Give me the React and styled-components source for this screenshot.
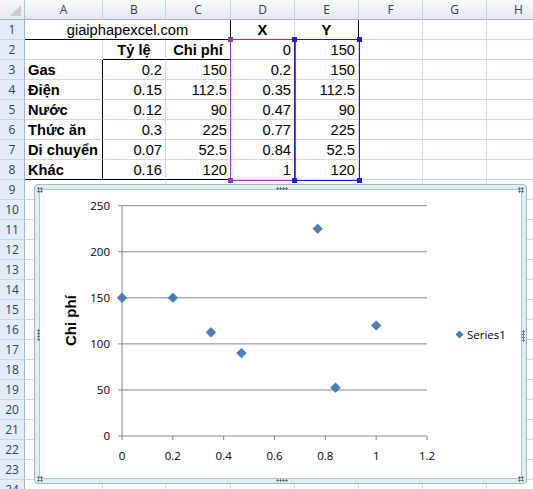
import React from "react";
import styled, { createGlobalStyle } from "styled-components";

//? sheet geometry
const COLS = [25, 78, 63, 65, 64, 64, 64, 64, 64];
const LETTERS = ["A", "B", "C", "D", "E", "F", "G", "H"];

const b = true;
const rows = [
  [
    { v: "giaiphapexcel.com", span: 3, align: "center", bb: b, br: b },
    { v: "X", bold: b, align: "center", bb: b },
    { v: "Y", bold: b, align: "center", bb: b, br: b },
    {}, {}, {},
  ],
  [
    {},
    { v: "Tỷ lệ", bold: b, align: "center", bb: b },
    { v: "Chi phí", bold: b, align: "center", bb: b, br: b },
    { v: "0" }, { v: "150" }, {}, {}, {},
  ],
  ["Gas", "0.2", "150", "0.2", "150"],
  ["Điện", "0.15", "112.5", "0.35", "112.5"],
  ["Nước", "0.12", "90", "0.47", "90"],
  ["Thức ăn", "0.3", "225", "0.77", "225"],
  ["Di chuyển", "0.07", "52.5", "0.84", "52.5"],
  ["Khác", "0.16", "120", "1", "120"],
];

const toCells = (r, i) => {
  if (typeof r[0] !== "string") return r;
  const last = i === 7;
  return [
    { v: r[0], bold: b, align: "left", br: b, bb: last },
    { v: r[1], bb: last },
    { v: r[2], br: b, bb: last },
    { v: r[3] },
    { v: r[4] },
    {}, {}, {},
  ];
};

const pts = [
  [0, 150],
  [0.2, 150],
  [0.35, 112.5],
  [0.47, 90],
  [0.77, 225],
  [0.84, 52.5],
  [1, 120],
];

//? chart scale (svg coords)
const X0 = 22;
const XS = 305 / 1.2;
const Y0 = 246;
const YS = 230.3 / 250;
const px = (x) => X0 + x * XS;
const py = (y) => Y0 - y * YS;

const diamond = (cx, cy, r) =>
  `M${cx} ${cy - r} L${cx + r} ${cy} L${cx} ${cy + r} L${cx - r} ${cy} Z`;

const GRIPS = ["tl", "tr", "bl", "br", "tm", "bm", "lm", "rm"];

const App = () => {
  const body = rows.map(toCells);
  const empties = Array.from({ length: 16 }, () => Array(8).fill({}));
  const all = [...body, ...empties];

  return (
    <>
      <Global />
      <Wrapper>
        <Sheet>
          <Corner />
          {LETTERS.map((l) => (
            <ColHead key={l}>{l}</ColHead>
          ))}
          {all.map((cells, ri) => (
            <React.Fragment key={ri}>
              <RowHead>{ri + 1}</RowHead>
              {cells.map((c, ci) => (
                <Cell
                  key={ci}
                  $span={c.span}
                  $align={c.align || "right"}
                  $bold={c.bold}
                  $bb={c.bb}
                  $br={c.br}
                >
                  {c.v}
                </Cell>
              ))}
            </React.Fragment>
          ))}
        </Sheet>

        <RangeBox $color="#9a32c8" $left={230}>
          <Knob $v="top" $h="left" />
          <Knob $v="bottom" $h="left" />
        </RangeBox>
        <RangeBox $color="#1f1fc0" $left={294}>
          <Knob $v="top" $h="left" />
          <Knob $v="top" $h="right" />
          <Knob $v="bottom" $h="left" />
          <Knob $v="bottom" $h="right" />
        </RangeBox>

        <Frame>
          <Inner>
            <YTitle>Chi phí</YTitle>
            <Plot width="350" height="288" viewBox="0 0 350 288">
              {[50, 100, 150, 200, 250].map((v) => (
                <line
                  key={v}
                  x1={X0}
                  x2={px(1.2)}
                  y1={py(v)}
                  y2={py(v)}
                  stroke="#868686"
                />
              ))}
              <line x1={X0} x2={X0} y1={py(250)} y2={Y0} stroke="#868686" />
              <line x1={X0} x2={px(1.2)} y1={Y0} y2={Y0} stroke="#868686" />
              {[0, 50, 100, 150, 200, 250].map((v) => (
                <g key={v}>
                  <line x1={X0 - 4} x2={X0} y1={py(v)} y2={py(v)} stroke="#868686" />
                  <text x={10} y={py(v) + 4} textAnchor="end">
                    {v}
                  </text>
                </g>
              ))}
              {[0, 0.2, 0.4, 0.6, 0.8, 1, 1.2].map((v) => (
                <g key={v}>
                  <line x1={px(v)} x2={px(v)} y1={Y0} y2={Y0 + 4} stroke="#868686" />
                  <text x={px(v)} y={270} textAnchor="middle">
                    {v}
                  </text>
                </g>
              ))}
              {pts.map(([x, y]) => (
                <path
                  key={x}
                  d={diamond(px(x), py(y), 4.8)}
                  fill="#4a7ebb"
                  stroke="#3d6a9e"
                  strokeWidth="0.6"
                />
              ))}
            </Plot>
            <Legend>
              <svg width="9" height="9" viewBox="0 0 9 9">
                <path d={diamond(4.5, 4.5, 4)} fill="#4a7ebb" />
              </svg>
              <span>Series1</span>
            </Legend>
          </Inner>
          {GRIPS.map((g) => (
            <Grip key={g} $spot={g} />
          ))}
        </Frame>
      </Wrapper>
    </>
  );
};

//? styles
const Global = createGlobalStyle`
  html, body {
    margin: 0;
    padding: 0;
    background: #fff;
    overflow: hidden;
  }
`;

const Wrapper = styled.div`
  position: relative;
  width: 533px;
  height: 489px;
  overflow: hidden;
`;

const Sheet = styled.div`
  display: grid;
  grid-template-columns: ${COLS.map((c) => c + "px").join(" ")};
  grid-auto-rows: 20px;
  font-family: "Liberation Sans", Arial, sans-serif;
  font-size: 11pt;
  color: #000;
`;

const Corner = styled.div`
  position: relative;
  box-sizing: border-box;
  background: linear-gradient(#f7f8fa, #e6e9ee);
  border-right: 1px solid #b9c4d3;
  border-bottom: 1px solid #9eb0c6;

  &::after {
    content: "";
    position: absolute;
    right: 3px;
    bottom: 3px;
    border-left: 11px solid transparent;
    border-bottom: 11px solid #c3cbd8;
  }
`;

const ColHead = styled.div`
  box-sizing: border-box;
  display: flex;
  align-items: center;
  justify-content: center;
  background: linear-gradient(#f9fafb, #e6e9ee);
  border-right: 1px solid #cdd3dc;
  border-bottom: 1px solid #9eb0c6;
  font-family: "Open Sans", sans-serif;
  font-size: 12px;
  color: #333c48;
`;

const RowHead = styled.div`
  box-sizing: border-box;
  display: flex;
  align-items: center;
  justify-content: center;
  background: #e4ecf7;
  border-right: 1px solid #9eb6ce;
  border-bottom: 1px solid #c6d3e3;
  font-family: "Open Sans", sans-serif;
  font-size: 12px;
  color: #27415f;
`;

const Cell = styled.div`
  box-sizing: border-box;
  grid-column: ${(p) => (p.$span ? `span ${p.$span}` : "auto")};
  display: flex;
  align-items: center;
  justify-content: ${(p) =>
    p.$align === "center" ? "center" : p.$align === "left" ? "flex-start" : "flex-end"};
  padding: 0 3px;
  white-space: nowrap;
  overflow: hidden;
  font-weight: ${(p) => (p.$bold ? 700 : 400)};
  border-right: 1px solid ${(p) => (p.$br ? "#000" : "#d0d7e5")};
  border-bottom: 1px solid ${(p) => (p.$bb ? "#000" : "#d0d7e5")};
`;

//? selection range outlines drawn over the sheet
const RangeBox = styled.div`
  position: absolute;
  left: ${(p) => p.$left}px;
  top: 39px;
  width: 66px;
  height: 142px;
  box-sizing: border-box;
  border: 1px solid ${(p) => p.$color};
  color: ${(p) => p.$color};
`;

const Knob = styled.span`
  position: absolute;
  width: 5px;
  height: 5px;
  background: currentColor;
  ${(p) => p.$v}: -3px;
  ${(p) => p.$h}: -3px;
`;

//? chart object floating over the sheet
const Frame = styled.div`
  position: absolute;
  left: 34px;
  top: 184px;
  width: 493px;
  height: 300px;
  box-sizing: border-box;
  padding: 4px;
  background: #dcefef;
  border: 1px solid #a3b8b8;
  border-radius: 4px;
`;

const Inner = styled.div`
  display: flex;
  height: 100%;
  box-sizing: border-box;
  background: #fff;
  border: 1px solid #b3c4c4;
  border-radius: 2px;
`;

const YTitle = styled.div`
  width: 60px;
  flex: none;
  display: flex;
  align-items: center;
  justify-content: center;
  box-sizing: border-box;
  padding-top: 26px;
  writing-mode: vertical-rl;
  transform: rotate(180deg);
  font-family: "Liberation Sans", Arial, sans-serif;
  font-weight: 700;
  font-size: 15px;
`;

const Plot = styled.svg`
  flex: none;
  display: block;
  overflow: visible;
  font-family: "Open Sans", sans-serif;
  font-size: 11.5px;
  fill: #000;
`;

const Legend = styled.div`
  flex: 1;
  display: flex;
  align-items: center;
  gap: 3px;
  padding-left: 5px;
  font-family: "Open Sans", sans-serif;
  font-size: 11.5px;
  color: #000;
`;

const GRIP_SPOTS = {
  tl: "left: 2px; top: 2px; width: 6px; height: 6px;",
  tr: "right: 2px; top: 2px; width: 6px; height: 6px;",
  bl: "left: 2px; bottom: 1px; width: 6px; height: 6px;",
  br: "right: 2px; bottom: 1px; width: 6px; height: 6px;",
  tm: "left: 241px; top: 2px; width: 12px; height: 3px;",
  bm: "left: 241px; bottom: 1px; width: 12px; height: 3px;",
  lm: "left: 2px; top: 144px; width: 3px; height: 12px;",
  rm: "right: 1px; top: 145px; width: 3px; height: 12px;",
};

const Grip = styled.span`
  position: absolute;
  ${(p) => GRIP_SPOTS[p.$spot]}
  background-image: radial-gradient(circle, #5a6a6a 45%, transparent 55%);
  background-size: 3px 3px;
`;

export default App;
